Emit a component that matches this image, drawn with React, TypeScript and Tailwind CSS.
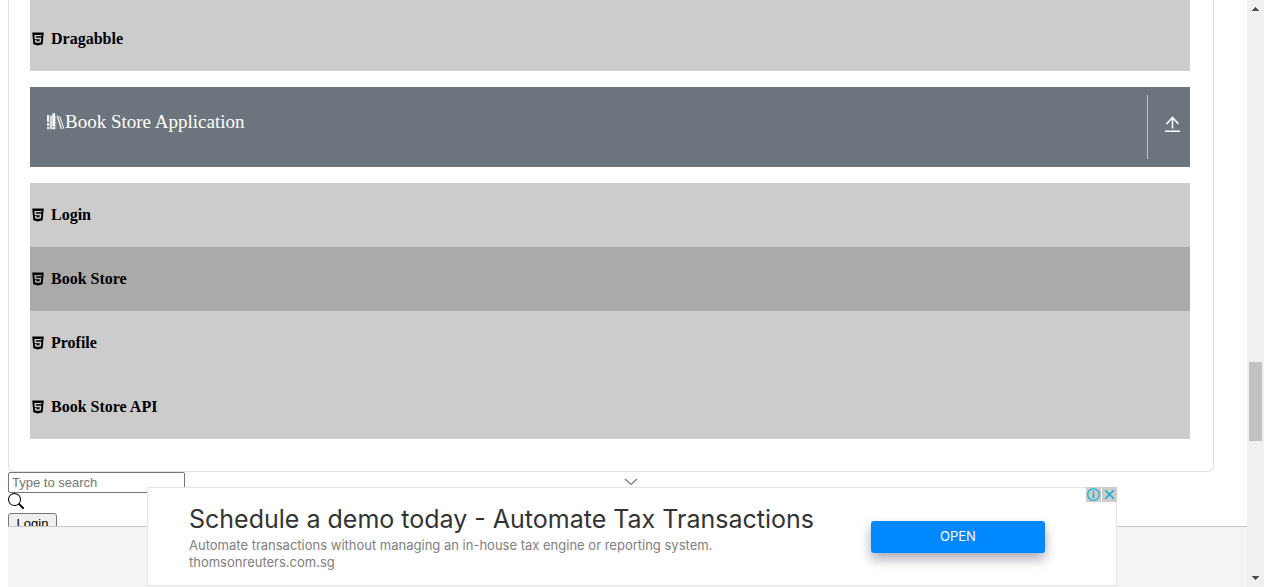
import { AiFillHtml5 } from "react-icons/ai";
import { BsSearch } from "react-icons/bs";

const bookStoreItems = [
  { label: "Login", active: false },
  { label: "Book Store", active: true },
  { label: "Profile", active: false },
  { label: "Book Store API", active: false },
];

function MenuItem({ label, active = false }: { label: string; active?: boolean }) {
  return (
    <li className={active ? "bg-[#aaaaaa]" : "bg-[#cccccc]"}>
      <a href="#" className="flex h-16 items-center gap-[5px] text-base font-bold text-black">
        <AiFillHtml5 size={16} aria-hidden="true" />
        {label}
      </a>
    </li>
  );
}

function BooksIcon() {
  return (
    <svg width="19" height="19" viewBox="0 0 19 19" fill="currentColor" aria-hidden="true">
      <path d="M1 2h2v7H1zM1 10h2v3H1zM1 14h2v2.2H1z" opacity="0.9" />
      <path d="M3.6 2.6h2.6v13.6H3.6z" opacity="0.75" />
      <path d="M6.4 .2h2.6v13.4H6.4zM6.4 14.2h2.6v2H6.4z" />
      <path d="M9.3 2.6h.9v13.6h-.9z" opacity="0.5" />
      <path d="M10.6 3l1.5-.6 4 13.4-1.4.5z" opacity="0.85" />
      <path d="M13.2 3.6l1-.5 4.2 12.5-1 .5z" opacity="0.85" />
    </svg>
  );
}

function GroupHeader() {
  return (
    <div className="flex h-20 bg-[#6c757d] py-2 text-white">
      <div className="flex flex-1 items-start pt-[13px] pl-4 text-[19px] leading-7">
        <span className="flex items-center">
          <BooksIcon />
          Book Store Application
        </span>
      </div>
      <button
        type="button"
        aria-label="Collapse"
        className="flex w-[43px] items-center justify-center border-l border-[#bcc1c5] pb-1.5 pl-2"
      >
        <svg width="20" height="20" viewBox="0 0 20 20" fill="none" stroke="currentColor" strokeWidth="1.6" aria-hidden="true">
          <path d="M9.5 14.5V3.5M3.5 10L9.5 3.5L15.5 10M2 17.2H17" />
        </svg>
      </button>
    </div>
  );
}

function Scrollbar() {
  return (
    <div aria-hidden="true" className="flex w-[17px] shrink-0 flex-col items-center bg-[#f0f0f0]">
      <svg className="h-[17px] w-[17px] shrink-0" viewBox="0 0 17 17" fill="#505050" shapeRendering="crispEdges">
        <path d="M5 11h7v-1h-1v-1h-1v-1h-1v-1h-1v1h-1v1h-1v1h-1z" />
      </svg>
      <div className="grow-[345]" />
      <div className="w-[13px] grow-[79] bg-[#c1c1c1]" />
      <div className="grow-[129]" />
      <svg className="h-[17px] w-[17px] shrink-0" viewBox="0 0 17 17" fill="#505050" shapeRendering="crispEdges">
        <path d="M5 6h7v1h-1v1h-1v1h-1v1h-1v-1h-1v-1h-1v-1h-1z" />
      </svg>
    </div>
  );
}

function Ad() {
  return (
    <aside className="relative flex h-[99px] w-[970px] items-center border border-[#e5e5e5] bg-white pl-[41px] font-['Inter',sans-serif]">
      <div className="w-[682px] pb-0.5">
        <h2 className="text-[25px] leading-9 whitespace-nowrap text-[#333333]">
          Schedule a demo today - Automate Tax Transactions
        </h2>
        <p className="text-[13px] leading-[17px] text-[#808080]">
          Automate transactions without managing an in-house tax engine or reporting system.
          <br />
          thomsonreuters.com.sg
        </p>
      </div>
      <button
        type="button"
        className="h-8 w-[174px] rounded-[3px] bg-[#0088ff] text-[13px] text-white shadow-[0_6px_12px_rgba(40,40,70,0.4)]"
      >
        OPEN
      </button>
      <div className="absolute -top-px -right-px flex gap-px text-[#00aecd]">
        <button type="button" aria-label="Ad information" className="bg-[#cccccc]">
          <svg width="15" height="15" viewBox="0 0 15 15" fill="none" stroke="currentColor" aria-hidden="true">
            <circle cx="7.5" cy="7.5" r="5.8" strokeWidth="1.1" />
            <path d="M7.5 6.5V11M7.5 3.8V5.2" strokeWidth="1.5" />
          </svg>
        </button>
        <button type="button" aria-label="Close ad" className="bg-[#cccccc]">
          <svg width="15" height="15" viewBox="0 0 15 15" fill="none" stroke="currentColor" strokeWidth="1.4" aria-hidden="true">
            <path d="M3.2 3.2L11.8 11.8M11.8 3.2L3.2 11.8" />
          </svg>
        </button>
      </div>
    </aside>
  );
}

export default function App() {
  return (
    <div className="flex h-screen overflow-hidden bg-white font-['Liberation_Serif',serif] text-black">
      <div className="relative min-w-0 flex-1 overflow-hidden pl-2">
        <main>
          <nav className="mr-[33px] rounded-b-md border border-t-0 border-[#dfdfdf] pr-[23px] pb-8 pl-[21px]">
            <ul className="bg-[#cccccc] pt-[7px]">
              <MenuItem label="Dragabble" />
            </ul>
            <div className="py-4">
              <GroupHeader />
            </div>
            <ul>
              {bookStoreItems.map((item) => (
                <MenuItem key={item.label} label={item.label} active={item.active} />
              ))}
            </ul>
          </nav>
          <div className="flex flex-col items-start font-['Liberation_Sans',sans-serif] text-[13px]">
            <input
              type="text"
              aria-label="Search"
              placeholder="Type to search"
              className="h-[21px] w-[177px] rounded-xs border border-[#767676] px-[3px] placeholder:text-[#757575]"
            />
            <button type="button" aria-label="Search" className="h-5">
              <BsSearch size={16} className="mb-1" aria-hidden="true" />
            </button>
            <button type="button" className="h-[21px] w-[49px] rounded-[3px] border border-[#767676] bg-[#efefef]">
              Login
            </button>
          </div>
        </main>
        <div className="absolute right-0 bottom-0 left-2 h-[61px] border-t border-[#c6c6c6] bg-[#f4f4f4]" />
        <div className="absolute inset-x-0 bottom-0 flex flex-col items-center pb-px pl-[17px]">
          <button type="button" aria-label="Hide ad" className="mb-px h-[9px] pr-0.5">
            <svg width="14" height="8" viewBox="0 0 14 8" fill="none" stroke="#777777" strokeWidth="1.2" aria-hidden="true">
              <path d="M1 1L7 6.5L13 1" />
            </svg>
          </button>
          <Ad />
        </div>
      </div>
      <Scrollbar />
    </div>
  );
}
